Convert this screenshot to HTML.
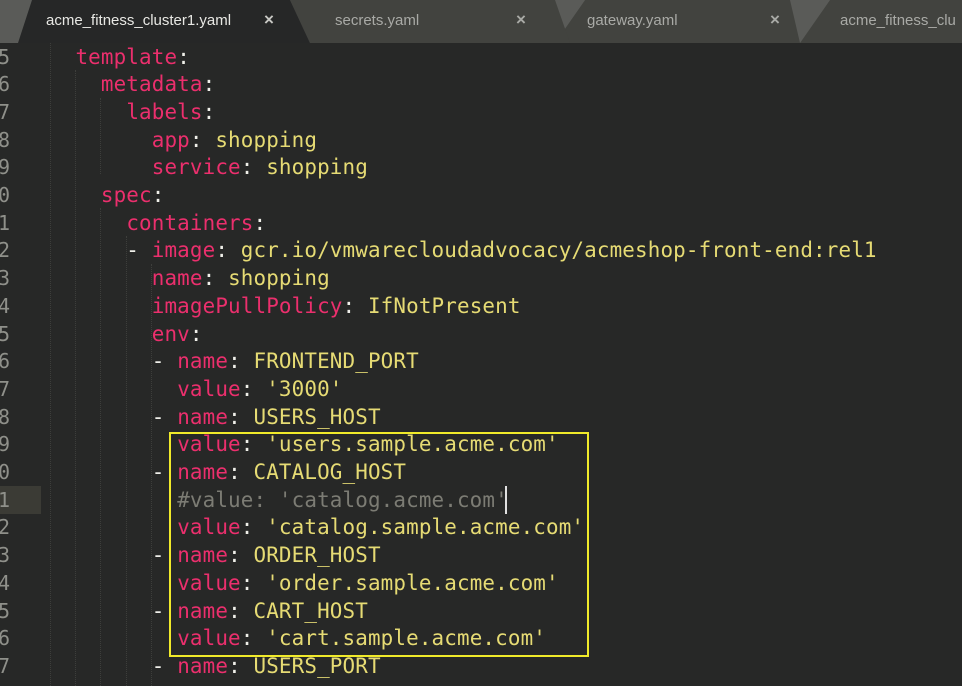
<!DOCTYPE html>
<html><head><meta charset="utf-8"><style>
html,body{margin:0;width:962px;height:686px;overflow:hidden}
body{background:#272827;position:relative;font-family:"DejaVu Sans Mono","Liberation Mono",monospace}
#wrap{position:absolute;left:0;top:0;width:962px;height:686px;overflow:hidden}
.tabbar{position:absolute;left:0;top:0;width:962px;height:43px;background:#5a5b58}
.tabtxt{position:absolute;top:12px;font-family:"Liberation Sans",sans-serif;font-size:15px;color:#a9aaa6;white-space:nowrap}
.x{position:absolute;top:10px;font-family:"Liberation Sans",sans-serif;font-size:17px;color:#a9aaa6;font-weight:bold}
.ln{position:absolute;left:-30px;width:40px;text-align:right;color:#8f908a;font-size:20px;line-height:27.7px}
.row{position:absolute;left:50px;white-space:pre;font-size:20.9px;letter-spacing:0.14px;line-height:27.7px;color:#f0f0ea}
.k{color:#eb2f6d}.s{color:#e6db74}.c{color:#7c7c74}
.g{position:absolute;width:0;border-left:1px dotted #3d3e3b}
</style></head><body><div id="wrap">
<div class="tabbar"></div>
<svg style="position:absolute;left:0;top:0" width="962" height="43">
<polygon points="800,43 830,0 962,0 962,43" fill="#42433f"/>
<polygon points="555,43 585,0 830,0 800,43" fill="#42433f"/>
<polygon points="555,43 585,0 545,0" fill="#5a5b58"/>
<polygon points="800,43 830,0 790,0" fill="#5a5b58"/>
<polygon points="310,43 290,0 555,0 570,43" fill="#42433f"/>
<polygon points="18,43 32,0 290,0 310,43" fill="#262727"/>
</svg>
<div class="tabtxt" style="left:46px;color:#e8e8e4">acme_fitness_cluster1.yaml</div>
<div class="x" style="left:264px;color:#c8c8c4">×</div>
<div class="tabtxt" style="left:335px">secrets.yaml</div>
<div class="x" style="left:516px">×</div>
<div class="tabtxt" style="left:587px">gateway.yaml</div>
<div class="x" style="left:770px">×</div>
<div class="tabtxt" style="left:840px">acme_fitness_clu</div>
<div style="position:absolute;left:0;top:43px;width:962px;height:643px;background:#272827"></div>
<div style="position:absolute;left:0;top:486px;width:41px;height:28px;background:#3b3b35"></div>
<div class="g" style="left:50px;top:43px;height:643px"></div>
<div class="g" style="left:75px;top:70px;height:616px"></div>
<div class="g" style="left:100px;top:98px;height:76px"></div>
<div class="g" style="left:100px;top:208px;height:478px"></div>
<div class="g" style="left:126px;top:236px;height:450px"></div>
<div class="g" style="left:151px;top:264px;height:422px"></div>
<div id="L"></div>
<div style="position:absolute;left:169px;top:432px;width:416px;height:221px;border:2px solid #f0ea2a"></div>
<div style="position:absolute;left:505px;top:486px;width:2px;height:28px;background:#e0e0e0"></div>
</div>
<script>
var lines=[
['  ','<span class=k>template</span>:'],
['    ','<span class=k>metadata</span>:'],
['      ','<span class=k>labels</span>:'],
['        ','<span class=k>app</span>: <span class=s>shopping</span>'],
['        ','<span class=k>service</span>: <span class=s>shopping</span>'],
['    ','<span class=k>spec</span>:'],
['      ','<span class=k>containers</span>:'],
['      ','- <span class=k>image</span>: <span class=s>gcr.io/vmwarecloudadvocacy/acmeshop-front-end:rel1</span>'],
['        ','<span class=k>name</span>: <span class=s>shopping</span>'],
['        ','<span class=k>imagePullPolicy</span>: <span class=s>IfNotPresent</span>'],
['        ','<span class=k>env</span>:'],
['        ','- <span class=k>name</span>: <span class=s>FRONTEND_PORT</span>'],
['          ','<span class=k>value</span>: <span class=s>\'3000\'</span>'],
['        ','- <span class=k>name</span>: <span class=s>USERS_HOST</span>'],
['          ','<span class=k>value</span>: <span class=s>\'users.sample.acme.com\'</span>'],
['        ','- <span class=k>name</span>: <span class=s>CATALOG_HOST</span>'],
['          ','<span class=c>#value: \'catalog.acme.com\'</span>'],
['          ','<span class=k>value</span>: <span class=s>\'catalog.sample.acme.com\'</span>'],
['        ','- <span class=k>name</span>: <span class=s>ORDER_HOST</span>'],
['          ','<span class=k>value</span>: <span class=s>\'order.sample.acme.com\'</span>'],
['        ','- <span class=k>name</span>: <span class=s>CART_HOST</span>'],
['          ','<span class=k>value</span>: <span class=s>\'cart.sample.acme.com\'</span>'],
['        ','- <span class=k>name</span>: <span class=s>USERS_PORT</span>']];
var h='';
for(var i=0;i<lines.length;i++){var t=43.5+i*27.7;
h+='<div class=ln style="top:'+t+'px">'+(i+5)+'</div><div class=row style="top:'+t+'px">'+lines[i][0]+lines[i][1]+'</div>';}
document.getElementById('L').innerHTML=h;
</script>
</body></html>
